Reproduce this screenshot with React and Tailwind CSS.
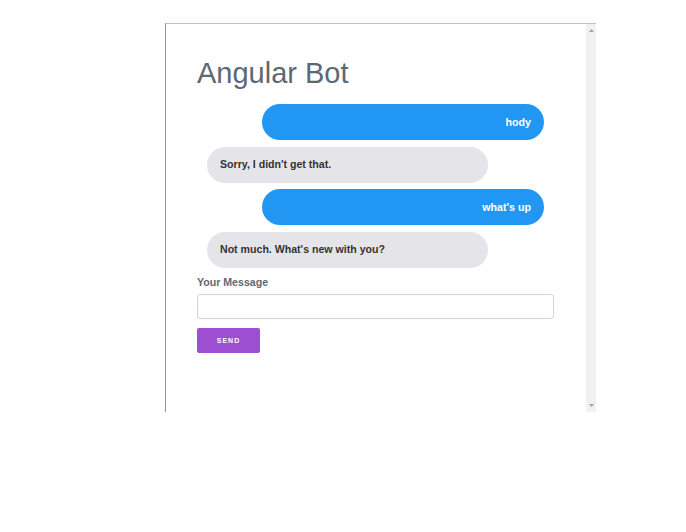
export default function App() {
  const font = { fontFamily: '"Liberation Sans", Arial, sans-serif' };
  return (
    <div className="w-[686px] h-[532px] bg-white" style={font}>
      <div className="pt-[23px] pl-[165px]">
        <div className="w-[431px] h-[389px] flex border-t border-l border-solid border-[#dcaee3] border-l-[#b97dc3] bg-white">
          <div className="flex-1 pl-[31px] pr-[32px] pt-[32px]">
            <h1 className="text-[29px] leading-[34px] text-[#5d6874] font-normal">Angular Bot</h1>
            <div className="mt-[14px] flex flex-col">
              <div className="ml-auto mr-[10px] w-[282px] h-[36px] rounded-full bg-[#2196f3] flex items-center justify-end pr-[13px] text-white text-[10.7px] font-bold">
                hody
              </div>
              <div className="mt-[7px] ml-[10px] w-[281px] h-[36px] rounded-full bg-[#e5e4e9] flex items-center pl-[13px] text-[#333] text-[10.6px] font-bold">
                Sorry, I didn't get that.
              </div>
              <div className="mt-[6px] ml-auto mr-[10px] w-[282px] h-[36px] rounded-full bg-[#2196f3] flex items-center justify-end pr-[13px] text-white text-[10.7px] font-bold">
                what's up
              </div>
              <div className="mt-[7px] ml-[10px] w-[281px] h-[36px] rounded-full bg-[#e5e4e9] flex items-center pl-[13px] text-[#333] text-[10.6px] font-bold">
                Not much. What's new with you?
              </div>
            </div>
            <div className="mt-[8px] text-[10.6px] leading-[13px] font-bold text-[#5f6773]">Your Message</div>
            <input
              type="text"
              className="mt-[5px] block w-[357px] h-[25px] border border-[#d2d2d2] rounded-[3px] bg-white outline-none"
            />
            <button className="mt-[9px] w-[63px] h-[25px] rounded-[2px] bg-[#9c4fd0] text-white text-[7px] font-bold tracking-[1px] flex items-center justify-center pt-[2px]">
              SEND
            </button>
          </div>
          <div className="w-[11px] bg-[#f1f1f1] flex flex-col items-center justify-between py-[5px]">
            <svg width="5" height="3" viewBox="0 0 5 3"><path d="M2.5 0 L5 3 L0 3 Z" fill="#a3a3a3" /></svg>
            <svg width="5" height="3" viewBox="0 0 5 3"><path d="M0 0 L5 0 L2.5 3 Z" fill="#a3a3a3" /></svg>
          </div>
        </div>
      </div>
    </div>
  );
}
